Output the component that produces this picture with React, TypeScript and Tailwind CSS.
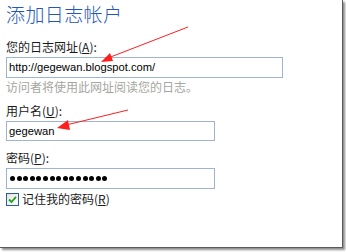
import React from "react";

const cjk = "font-['Noto_Sans_CJK_SC','Noto_Sans',sans-serif]";

function Label({ text, hotkey }: { text: string; hotkey: string }) {
  return (
    <div className={`${cjk} text-[12px] leading-[14px] text-[#1a1a1a]`}>
      {text}(<span className="underline">{hotkey}</span>):
    </div>
  );
}

export default function App() {
  return (
    <div className="relative w-[346px] h-[252px] bg-white overflow-hidden">
      <div className="w-[343px] h-[248px] bg-white border-r border-b border-[#5a5a5a] shadow-[2px_2px_2px_rgba(0,0,0,0.45)] pl-[6px] pt-[2px] flex flex-col">
        <h1 className={`${cjk} text-[19px] leading-[24px] tracking-[0.4px] font-light text-[#2456b8]`}>添加日志帐户</h1>

        <div className="mt-[14px]">
          <Label text="您的日志网址" hotkey="A" />
        </div>
        <div className="mt-[3px] w-[277px] h-[21px] border border-[#9fb4ce] flex items-center pl-[2px]">
          <span className="font-['Liberation_Sans',sans-serif] text-[11.2px] text-black">http://gegewan.blogspot.com/</span>
        </div>
        <div className={`${cjk} mt-[2px] text-[12px] leading-[14px] text-[#a6a6a0]`}>
          访问者将使用此网址阅读您的日志。
        </div>

        <div className="mt-[10px]">
          <Label text="用户名" hotkey="U" />
        </div>
        <div className="mt-[3px] w-[209px] h-[20px] border border-[#9fb4ce] flex items-center pl-[2px]">
          <span className="font-['Liberation_Sans',sans-serif] text-[11.2px] text-black">gegewan</span>
        </div>

        <div className="mt-[10px]">
          <Label text="密码" hotkey="P" />
        </div>
        <div className="mt-[3px] w-[209px] h-[21px] border border-[#9fb4ce] flex items-center pl-[3px] gap-[1.6px]">
          {Array.from({ length: 15 }).map((_, i) => (
            <div key={i} className="w-[5px] h-[5px] rounded-full bg-black" />
          ))}
        </div>

        <div className="mt-[3px] flex items-center gap-[3px]">
          <div className="w-[13px] h-[13px] border border-[#2b5f8e] bg-gradient-to-br from-[#e4e4de] to-white flex items-center justify-center">
            <svg width="9" height="9" viewBox="0 0 9 9">
              <path d="M1 4.5 L3.5 7 L8 1.8" fill="none" stroke="#21a121" strokeWidth="1.8" />
            </svg>
          </div>
          <span className={`${cjk} text-[12px] leading-[14px] text-[#1a1a1a]`}>
            记住我的密码(<span className="underline">R</span>)
          </span>
        </div>
      </div>

      <svg className="absolute inset-0 pointer-events-none" width="346" height="252" viewBox="0 0 346 252">
        <line x1="188" y1="27" x2="108" y2="58" stroke="#ff1e1e" strokeWidth="1" />
        <polygon points="101,62 110,53 113,61" fill="#ff1e1e" />
        <line x1="128" y1="110" x2="66" y2="125" stroke="#ff1e1e" strokeWidth="1" />
        <polygon points="57,128 68,120 70,130" fill="#ff1e1e" />
      </svg>
    </div>
  );
}
